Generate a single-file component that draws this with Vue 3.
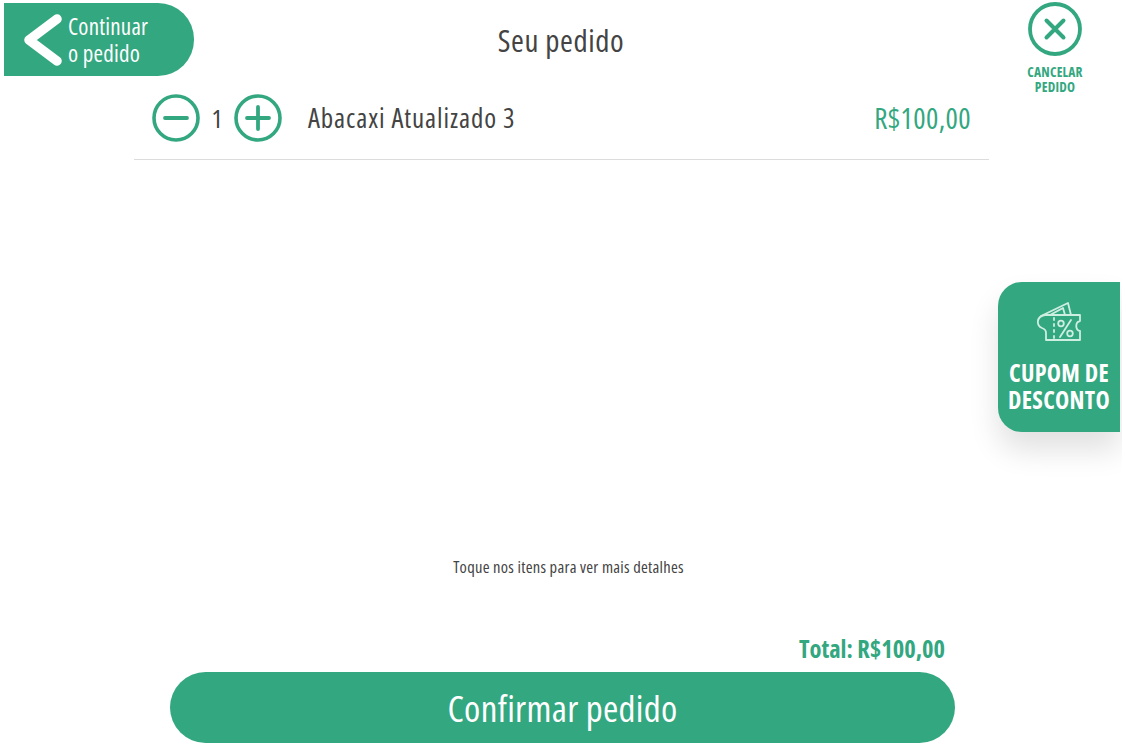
<script setup>
const item = { qty: 1, name: 'Abacaxi Atualizado 3', price: 'R$100,00' }
</script>

<template>
  <div class="page">
    <header class="top">
      <button class="back">
        <svg class="chev" viewBox="0 0 38 52" width="38" height="52">
          <path d="M33 5 L5 26 L33 47" fill="none" stroke="#fff" stroke-width="9.5" stroke-linecap="round" stroke-linejoin="round" />
        </svg>
        <span class="back-text"><span>Continuar</span><span>o pedido</span></span>
      </button>
      <h1 class="title">Seu pedido</h1>
      <div class="cancel">
        <svg viewBox="0 0 54 54" width="54" height="54">
          <circle cx="27" cy="27" r="25" fill="none" stroke="#33a780" stroke-width="3.8" />
          <path d="M18.5 18.5 L35.5 35.5 M35.5 18.5 L18.5 35.5" stroke="#33a780" stroke-width="4" stroke-linecap="round" />
        </svg>
        <span class="cancel-text">CANCELAR<br />PEDIDO</span>
      </div>
    </header>

    <section class="row">
      <div class="qty">
        <svg viewBox="0 0 48 48" width="48" height="48">
          <circle cx="24" cy="24" r="22" fill="none" stroke="#33a780" stroke-width="3.6" />
          <path d="M13 24 H35" stroke="#33a780" stroke-width="3.8" stroke-linecap="round" />
        </svg>
        <span class="num">{{ item.qty }}</span>
        <svg viewBox="0 0 48 48" width="48" height="48">
          <circle cx="24" cy="24" r="22" fill="none" stroke="#33a780" stroke-width="3.6" />
          <path d="M13 24 H35 M24 13 V35" stroke="#33a780" stroke-width="3.8" stroke-linecap="round" />
        </svg>
      </div>
      <span class="name">{{ item.name }}</span>
      <span class="price">{{ item.price }}</span>
    </section>

    <div class="spacer"></div>
    <p class="hint">Toque nos itens para ver mais detalhes</p>
    <div class="total">Total: R$100,00</div>
    <button class="confirm">Confirmar pedido</button>

    <aside class="coupon">
      <svg viewBox="0 0 46 40" width="46" height="40" fill="none" stroke="#cfeee2" stroke-width="1.8" stroke-linejoin="round" stroke-linecap="round">
        <path d="M5 15 L32 2 L35 14" />
        <path d="M14 14 L27 7 L29 14" />
        <path d="M9 14 H44 V20 C39 21 39 29 44 30 V39 H10 V32 C10 29 9 28 6 27 C1 25 -1 16 9 14 Z" />
        <path d="M18 17 V19 M18 23 V25 M18 29 V31 M18 35 V37" />
        <path d="M35 19 L24 36" />
        <circle cx="25" cy="22.5" r="2.8" />
        <circle cx="34" cy="32.5" r="2.8" />
      </svg>
      <span class="coupon-text">CUPOM DE<br />DESCONTO</span>
    </aside>
  </div>
</template>

<style>
html, body { margin: 0; background: #fff; }
</style>

<style scoped>
.page {
  position: relative;
  width: 1122px;
  height: 754px;
  box-sizing: border-box;
  padding-top: 3px;
  display: flex;
  flex-direction: column;
  overflow: hidden;
  font-family: "Open Sans", "Noto Sans", sans-serif;
  font-stretch: 75%;
  font-weight: 400;
  color: #444;
}
.top {
  height: 73px;
  display: grid;
  grid-template-columns: 190px 1fr 110px;
  padding-left: 4px;
  padding-right: 12px;
  align-items: start;
}
.back {
  height: 73px;
  border: 0;
  padding: 0 0 0 20px;
  background: #33a780;
  border-radius: 0 36px 36px 0;
  display: flex;
  align-items: center;
  gap: 6px;
  color: #fff;
  font: inherit;
}
.chev { flex: none; }
.back-text {
  display: flex;
  flex-direction: column;
  align-items: flex-start;
  font-size: 23px;
  line-height: 27px;
  letter-spacing: 0.2px;
}
.title {
  margin: 16px 0 0;
  text-align: center;
  font-weight: 400;
  font-size: 31px;
  line-height: 42px;
  letter-spacing: 0.6px;
  padding-right: 72px;
}
.cancel {
  margin-top: -1px;
  display: flex;
  flex-direction: column;
  align-items: center;
  color: #33a780;
}
.cancel-text {
  margin-top: 9px;
  font-size: 13.5px;
  line-height: 15px;
  font-weight: 700;
  letter-spacing: 0.2px;
  text-align: center;
}
.row {
  width: 855px;
  height: 84px;
  margin-left: 134px;
  box-sizing: border-box;
  border-bottom: 1px solid #dcdcdc;
  padding: 18px 18px 0;
  display: flex;
  align-items: flex-start;
}
.qty { display: flex; align-items: center; height: 48px; }
.num { width: 34px; text-align: center; font-size: 26px; }
.name { margin-left: 26px; font-size: 27px; line-height: 48px; letter-spacing: 0.9px; }
.price { margin-left: auto; font-size: 29px; line-height: 48px; letter-spacing: 0.4px; color: #33a780; }
.spacer { flex: 1; }
.hint {
  margin: 0 0 57px;
  text-align: center;
  font-size: 16.5px;
  line-height: 20px;
  letter-spacing: 0.27px;
  padding-left: 15px;
}
.total {
  width: 945px;
  text-align: right;
  color: #33a780;
  font-weight: 700;
  font-size: 24.5px;
  line-height: 30px;
  margin-bottom: 8px;
}
.confirm {
  width: 785px;
  height: 71px;
  margin: 0 0 11px 170px;
  border: 0;
  border-radius: 36px;
  background: #33a780;
  color: #fff;
  font: inherit;
  font-size: 37px;
  letter-spacing: 0.3px;
}
.coupon {
  position: absolute;
  left: 998px;
  top: 282px;
  width: 122px;
  height: 150px;
  box-sizing: border-box;
  padding-top: 19px;
  background: #33a780;
  border-radius: 24px 0 0 24px;
  box-shadow: 0 18px 30px rgba(0, 0, 0, 0.12);
  display: flex;
  flex-direction: column;
  align-items: center;
  color: #fff;
}
.coupon-text {
  margin-top: 18px;
  font-size: 24px;
  line-height: 27px;
  font-weight: 700;
  letter-spacing: 0.3px;
  text-align: center;
}
</style>
